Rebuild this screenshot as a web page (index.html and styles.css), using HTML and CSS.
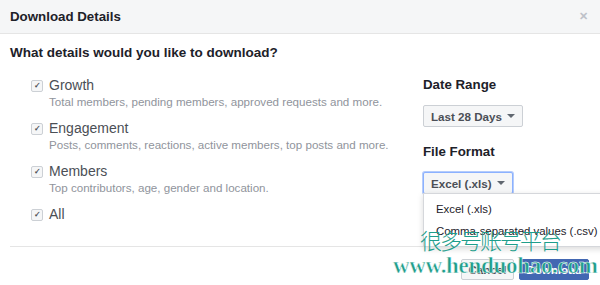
FILE: index.html
```html
<!DOCTYPE html>
<html lang="en">
<head>
  <meta charset="UTF-8" />
  <title>Download Details</title>
  <link rel="stylesheet" href="styles.css">
</head>
<body>
  <div class="dialog">
    <header class="dialog-head">
      <h1>Download Details</h1>
      <span class="close">&#x2715;</span>
    </header>

    <div class="dialog-body">
      <h2 class="question">What details would you like to download?</h2>

      <div class="columns">
        <ul class="options">
          <li>
            <div class="opt-label"><span class="check">&#x2713;</span>Growth</div>
            <div class="opt-desc">Total members, pending members, approved requests and more.</div>
          </li>
          <li>
            <div class="opt-label"><span class="check">&#x2713;</span>Engagement</div>
            <div class="opt-desc">Posts, comments, reactions, active members, top posts and more.</div>
          </li>
          <li>
            <div class="opt-label"><span class="check">&#x2713;</span>Members</div>
            <div class="opt-desc">Top contributors, age, gender and location.</div>
          </li>
          <li>
            <div class="opt-label"><span class="check">&#x2713;</span>All</div>
          </li>
        </ul>

        <div class="settings">
          <h3>Date Range</h3>
          <button class="select">Last 28 Days <span class="caret"></span></button>
          <h3>File Format</h3>
          <div class="select-wrap">
            <button class="select focused">Excel (.xls) <span class="caret"></span></button>
            <ul class="menu">
              <li>Excel (.xls)</li>
              <li>Comma-separated values (.csv)</li>
            </ul>
          </div>
        </div>
      </div>
    </div>

    <footer class="dialog-foot">
      <button class="btn cancel">Cancel</button>
      <button class="btn primary">Download</button>
    </footer>

    <div class="watermark">
      <div class="wm-cn">很多号账号平台</div>
      <div class="wm-url">www.henduohao.com</div>
    </div>
  </div>
</body>
</html>
```

FILE: styles.css
```css
:root {
  --text: #1d2129;
  --muted: #90949c;
  --label: #4b4f56;
  --border: #dddfe2;
  --blue: #4267b2;
}

body {
  margin: 0;
  font-family: "Liberation Sans", Arial, sans-serif;
  color: var(--text);
  background: #fff;
}

.dialog {
  position: relative;
  width: 600px;
  height: 285px;
  overflow: hidden;
}

.dialog-head {
  height: 33px;
  background: #f5f6f7;
  border-bottom: 1px solid #e5e5e5;
  display: flex;
  align-items: center;
  justify-content: space-between;
  padding: 0 12px 0 10px;
}

.dialog-head h1 {
  margin: 0;
  font-size: 13.3px;
  font-weight: bold;
}

.close {
  color: #bec2c9;
  font-size: 11px;
  font-weight: bold;
}

.dialog-body {
  padding: 11px 10px 0;
  height: 200px;
}

.question {
  margin: 0;
  font-size: 13.5px;
  line-height: 16px;
  font-weight: bold;
}

.columns {
  display: flex;
  margin-top: 15px;
}

.options {
  list-style: none;
  margin: 0;
  padding: 0 0 0 21px;
  width: 392px;
}

.options li {
  margin-bottom: 9px;
}

.opt-label {
  display: flex;
  align-items: center;
  font-size: 14px;
  line-height: 18px;
  color: var(--label);
}

.check {
  width: 10px;
  height: 10px;
  border: 1px solid #ccd0d5;
  border-radius: 2px;
  background: #f5f6f7;
  margin: 2px 6px 0 0;
  display: inline-flex;
  align-items: center;
  justify-content: center;
  font-size: 8px;
  line-height: 1;
  color: #4b4f56;
  font-weight: bold;
}

.opt-desc {
  padding-left: 18px;
  font-size: 11.6px;
  line-height: 16px;
  color: var(--muted);
}

.settings h3 {
  margin: 0 0 11px;
  font-size: 13.3px;
  line-height: 18px;
  font-weight: bold;
}

.select {
  display: inline-flex;
  align-items: center;
  gap: 4px;
  height: 22px;
  padding: 0 7px;
  background: #f5f6f7;
  border: 1px solid #ccd0d5;
  border-radius: 2px;
  font-family: inherit;
  font-size: 11.6px;
  font-weight: bold;
  color: var(--label);
  margin-bottom: 16px;
}

.caret {
  width: 0;
  height: 0;
  border-left: 4px solid transparent;
  border-right: 4px solid transparent;
  border-top: 4px solid #606770;
  margin-left: 1px;
}

.select-wrap {
  position: relative;
}

.select.focused {
  border-color: #8bb1ff;
  box-shadow: 0 0 0 1px #b5ccfb;
}

.menu {
  position: absolute;
  top: 21px;
  left: 0;
  width: 190px;
  margin: 0;
  padding: 4px 0;
  list-style: none;
  background: #fff;
  border: 1px solid #d5d7db;
  box-shadow: 0 2px 6px rgba(0, 0, 0, 0.15);
  z-index: 2;
}

.menu li {
  padding: 0 12px;
  font-size: 11.4px;
  line-height: 22px;
  color: var(--text);
  white-space: nowrap;
}

.dialog-foot {
  margin: 1px 0 0 10px;
  border-top: 1px solid #e5e5e5;
  display: flex;
  justify-content: flex-end;
  gap: 5px;
  padding: 12px 11px 0 0;
}

.btn {
  height: 21px;
  padding: 0;
  border: 1px solid #ccd0d5;
  border-radius: 2px;
  background: #f5f6f7;
  font-family: inherit;
  font-size: 11.6px;
  font-weight: bold;
  color: var(--label);
}

.btn.cancel {
  width: 53px;
}

.btn.primary {
  width: 70px;
  background: var(--blue);
  border-color: var(--blue);
  color: #fff;
}

.watermark {
  position: absolute;
  left: 393px;
  top: 226px;
  color: #1f9e8c;
  z-index: 3;
  pointer-events: none;
}

.wm-cn {
  margin-left: 27px;
  font-family: "Noto Sans CJK SC", sans-serif;
  font-size: 22px;
  line-height: 26px;
  letter-spacing: -2px;
  font-weight: 300;
}

.wm-url {
  font-family: "Liberation Serif", serif;
  font-size: 23px;
  line-height: 28px;
  font-weight: bold;
  letter-spacing: -0.3px;
  -webkit-text-stroke: 0.5px #fff;
}
```
